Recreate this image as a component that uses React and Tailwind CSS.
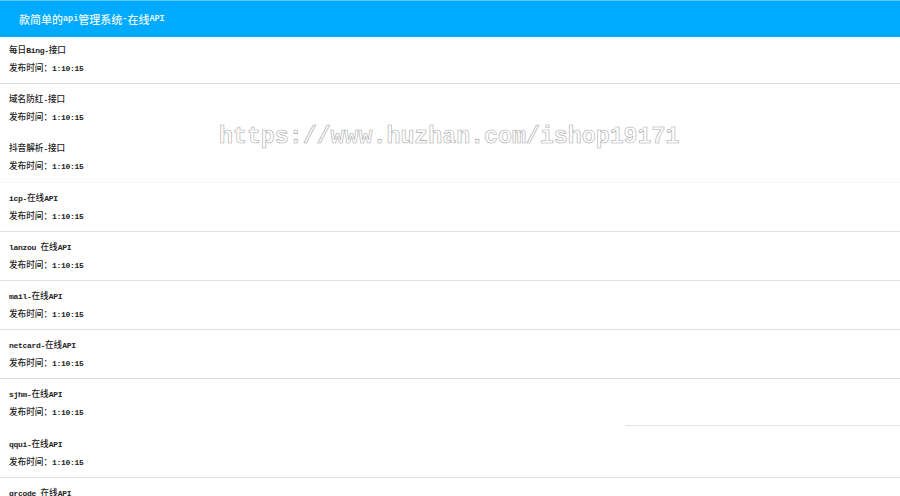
const items = [
  { name: "每日Bing-接口", border: "border-[#dcdcdc]" },
  { name: "域名防红-接口", border: "border-transparent" },
  { name: "抖音解析-接口", border: "border-[#f6f6f6]" },
  { name: "icp-在线API", border: "border-[#e0e0e0]" },
  { name: "lanzou 在线API", border: "border-[#e0e0e0]" },
  { name: "mail-在线API", border: "border-[#e0e0e0]" },
  { name: "netcard-在线API", border: "border-[#dcdcdc]" },
  { name: "sjhm-在线API", border: "border-transparent", partial: true },
  { name: "qqui-在线API", border: "border-[#e0e0e0]" },
  { name: "qrcode 在线API", border: "border-[#e0e0e0]" },
];

// Latin runs are narrower than the CJK ones in the picture, so they get their own size
function Mixed({ text, latinClass }) {
  return text.split(/([\x00-\x7f]+)/).map((part, i) =>
    i % 2 === 1 ? (
      <span key={i} className={`font-['Liberation_Mono',monospace] ${latinClass}`}>
        {part}
      </span>
    ) : (
      <span key={i}>{part}</span>
    )
  );
}

function Row({ item }) {
  const latin = "text-[8px] font-bold tracking-[-0.3px]";
  return (
    <div className={`relative h-[49.2px] shrink-0 border-b pl-[9px] text-[8.6px] font-medium text-[#222] ${item.border}`}>
      <p className="pt-[7px] leading-[14px] whitespace-pre">
        <Mixed text={item.name} latinClass={latin} />
      </p>
      <p className="mt-[2px] leading-[14px] whitespace-pre">
        <Mixed text="发布时间：1:10:15" latinClass={latin} />
      </p>
      {item.partial && (
        <div className="absolute right-0 bottom-[2px] left-[625px] h-px bg-[#e2e2e2]" />
      )}
    </div>
  );
}

export default function App() {
  return (
    <div className="relative h-[496px] w-[900px] overflow-hidden bg-white font-['Noto_Sans_CJK_SC',sans-serif]">
      <header className="relative z-10 flex h-[37px] items-center border-t border-[#5cc8ff] bg-[#00aaff] pl-[19px] text-[11px] font-medium whitespace-pre text-[#e8f7ff]">
        <Mixed text="款简单的api管理系统-在线API" latinClass="text-[8.5px] font-bold" />
      </header>
      <main className="-mt-[2px] flex flex-col">
        {items.map((item) => (
          <Row key={item.name} item={item} />
        ))}
      </main>
      <div className="absolute top-[123px] left-[219px] z-20 font-['Liberation_Mono',monospace] text-[23.25px] leading-[28px] font-bold whitespace-nowrap text-white opacity-[0.99] [-webkit-text-stroke:0.6px_#aaaaaa]">
        https://www.huzhan.com/ishop19171
      </div>
    </div>
  );
}
